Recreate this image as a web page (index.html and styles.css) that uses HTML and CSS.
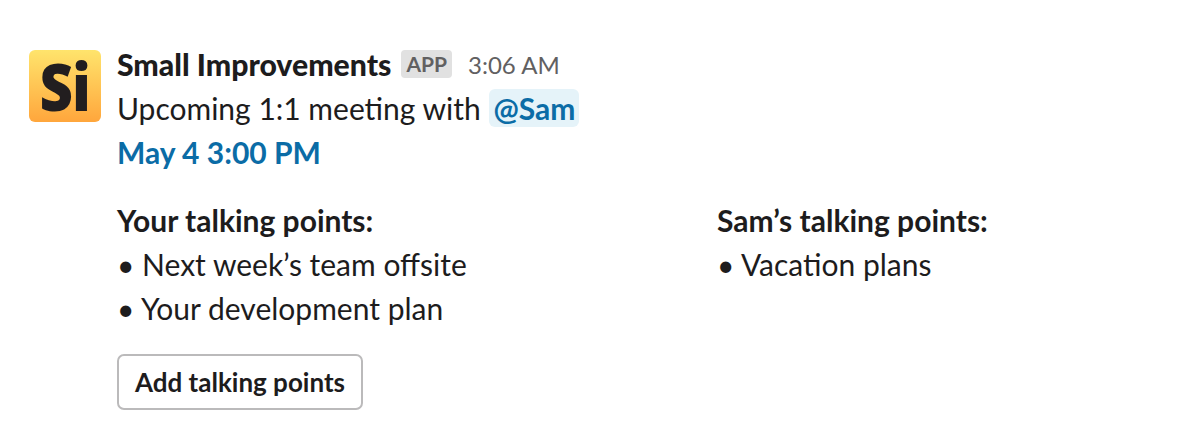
FILE: index.html
```html
<!DOCTYPE html>
<html lang="en">
<head>
<meta charset="utf-8">
<title>Small Improvements</title>
<link rel="stylesheet" href="styles.css">
</head>
<body>
<div class="message">
  <div class="avatar"><span class="logo">Si</span></div>
  <div class="content">
    <div class="header">
      <span class="name">Small Improvements</span>
      <span class="badge">APP</span>
      <span class="time">3:06 AM</span>
    </div>
    <div class="line">Upcoming 1:1 meeting with <span class="mention">@Sam</span></div>
    <div class="line"><a class="link">May 4 3:00 PM</a></div>
    <div class="columns">
      <div class="column">
        <div class="line strong">Your talking points:</div>
        <div class="line">• Next week’s team offsite</div>
        <div class="line">• Your development plan</div>
      </div>
      <div class="column">
        <div class="line strong">Sam’s talking points:</div>
        <div class="line">• Vacation plans</div>
      </div>
    </div>
    <button class="button">Add talking points</button>
  </div>
</div>
</body>
</html>
```

FILE: styles.css
```css
* { box-sizing: border-box; }
html, body { margin: 0; background: #fff; }
body {
  font-family: Lato, "Liberation Sans", sans-serif;
  color: #1d1c1d;
  font-size: 30px;
  height: 447px;
  overflow: hidden;
}
.message {
  display: flex;
  gap: 16px;
  padding: 42px 0 0 29px;
}
.avatar {
  flex: none;
  width: 72px;
  height: 72px;
  margin-top: 8px;
  border-radius: 6px;
  background: linear-gradient(#ffe46c, #ffa63c);
  display: flex;
  align-items: center;
  justify-content: center;
  color: #221e1f;
}
.logo {
  font-family: "Open Sans", sans-serif;
  font-weight: 800;
  font-size: 66px;
  line-height: 72px;
  letter-spacing: -1px;
  display: block;
  transform: translateY(-1px) scaleX(0.88);
}
.content { flex: 1; min-width: 0; }
.line { line-height: 44px; height: 44px; white-space: nowrap; }
.header {
  display: flex;
  align-items: center;
  height: 44px;
  white-space: nowrap;
}
.name { font-weight: 900; font-size: 30.2px; }
.badge {
  margin-left: 10px;
  padding: 0 5px;
  height: 28px;
  line-height: 28px;
  border-radius: 4px;
  background: #e1e1e1;
  color: #616061;
  font-size: 21px;
  font-weight: 700;
}
.time { margin-left: 16px; font-size: 24px; color: #616061; }
.mention {
  display: inline-block;
  height: 38px;
  line-height: 38px;
  margin-left: 1px;
  padding: 0 4px;
  border-radius: 6px;
  background: #e5f3f9;
  color: #0b6ca6;
  font-weight: 700;
}
.link { color: #0b6ca6; font-weight: 700; }
.columns {
  display: grid;
  grid-template-columns: 600px 1fr;
  margin-top: 24px;
}
.strong { font-weight: 700; }
.button {
  display: block;
  margin-top: 24px;
  width: 246px;
  height: 56px;
  padding: 0;
  border: 2px solid #bbbabb;
  border-radius: 7px;
  background: #fff;
  color: #1d1c1d;
  font-family: inherit;
  font-size: 26px;
  font-weight: 700;
}
```
